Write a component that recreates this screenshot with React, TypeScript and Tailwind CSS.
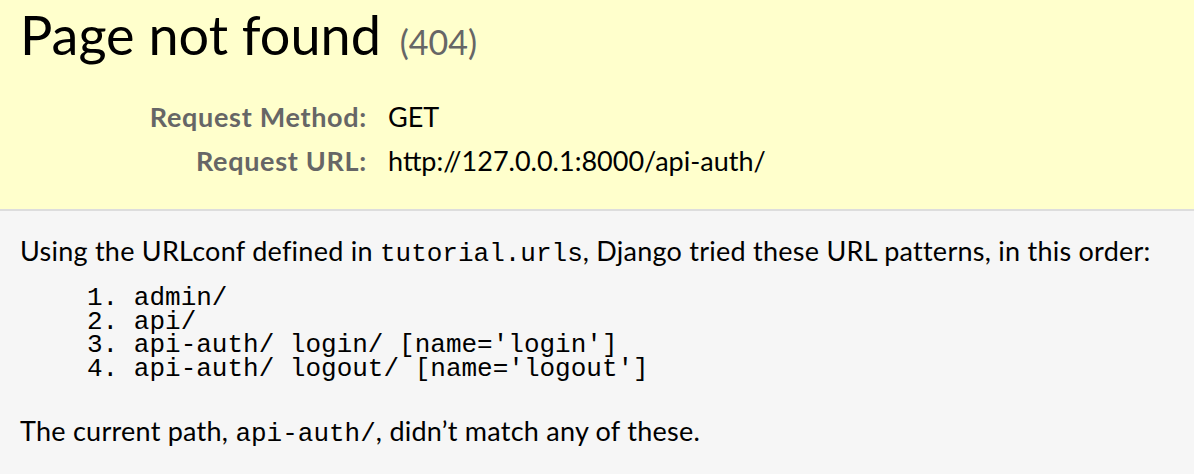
const patterns = [
  "admin/",
  "api/",
  "api-auth/ login/ [name='login']",
  "api-auth/ logout/ [name='logout']",
];

export default function App() {
  return (
    <div className="min-h-screen bg-[#eeeeee] font-['Lato',sans-serif] text-black">
      <div className="border-b-2 border-[#dddddd] bg-[#ffffcc] px-[20px] pt-[4px] pb-[26px]">
        <h1 className="text-[54px] leading-[62px] font-normal">
          Page not found <span className="ml-[5px] text-[34px] text-[#666666]">(404)</span>
        </h1>
        <div className="mt-[22px] flex flex-col text-[27px]">
          <div className="flex h-[44px] items-start leading-[44px]">
            <div className="w-[347px] shrink-0 text-right font-bold tracking-[0.7px] text-[#666666]">Request Method:</div>
            <div className="ml-[21px]">GET</div>
          </div>
          <div className="flex h-[44px] items-start leading-[44px]">
            <div className="w-[347px] shrink-0 text-right font-bold tracking-[0.7px] text-[#666666]">Request URL:</div>
            <div className="ml-[21px]">http://127.0.0.1:8000/api-auth/</div>
          </div>
        </div>
      </div>
      <div className="border-b-2 border-[#dddddd] bg-[#f6f6f6] px-[20px] pt-[25px] pb-[30px] text-[27px] tracking-[0.25px]">
        <p className="leading-[30px]">
          Using the URLconf defined in{" "}
          <code className="font-['Liberation_Mono',monospace] text-[26px] tracking-normal">tutorial.urls</code>, Django
          tried these URL patterns, in this order:
        </p>
        <ol className="mt-[18px] pl-[67px] font-['Liberation_Mono',monospace] text-[26px] leading-[23.5px] tracking-normal whitespace-pre">
          {patterns.map((p, i) => (
            <li key={p}>
              {i + 1}. {p}
            </li>
          ))}
        </ol>
        <p className="mt-[35px] leading-[30px]">
          The current path,{" "}
          <code className="font-['Liberation_Mono',monospace] text-[26px] tracking-normal">api-auth/</code>, didn’t
          match any of these.
        </p>
      </div>
    </div>
  );
}
